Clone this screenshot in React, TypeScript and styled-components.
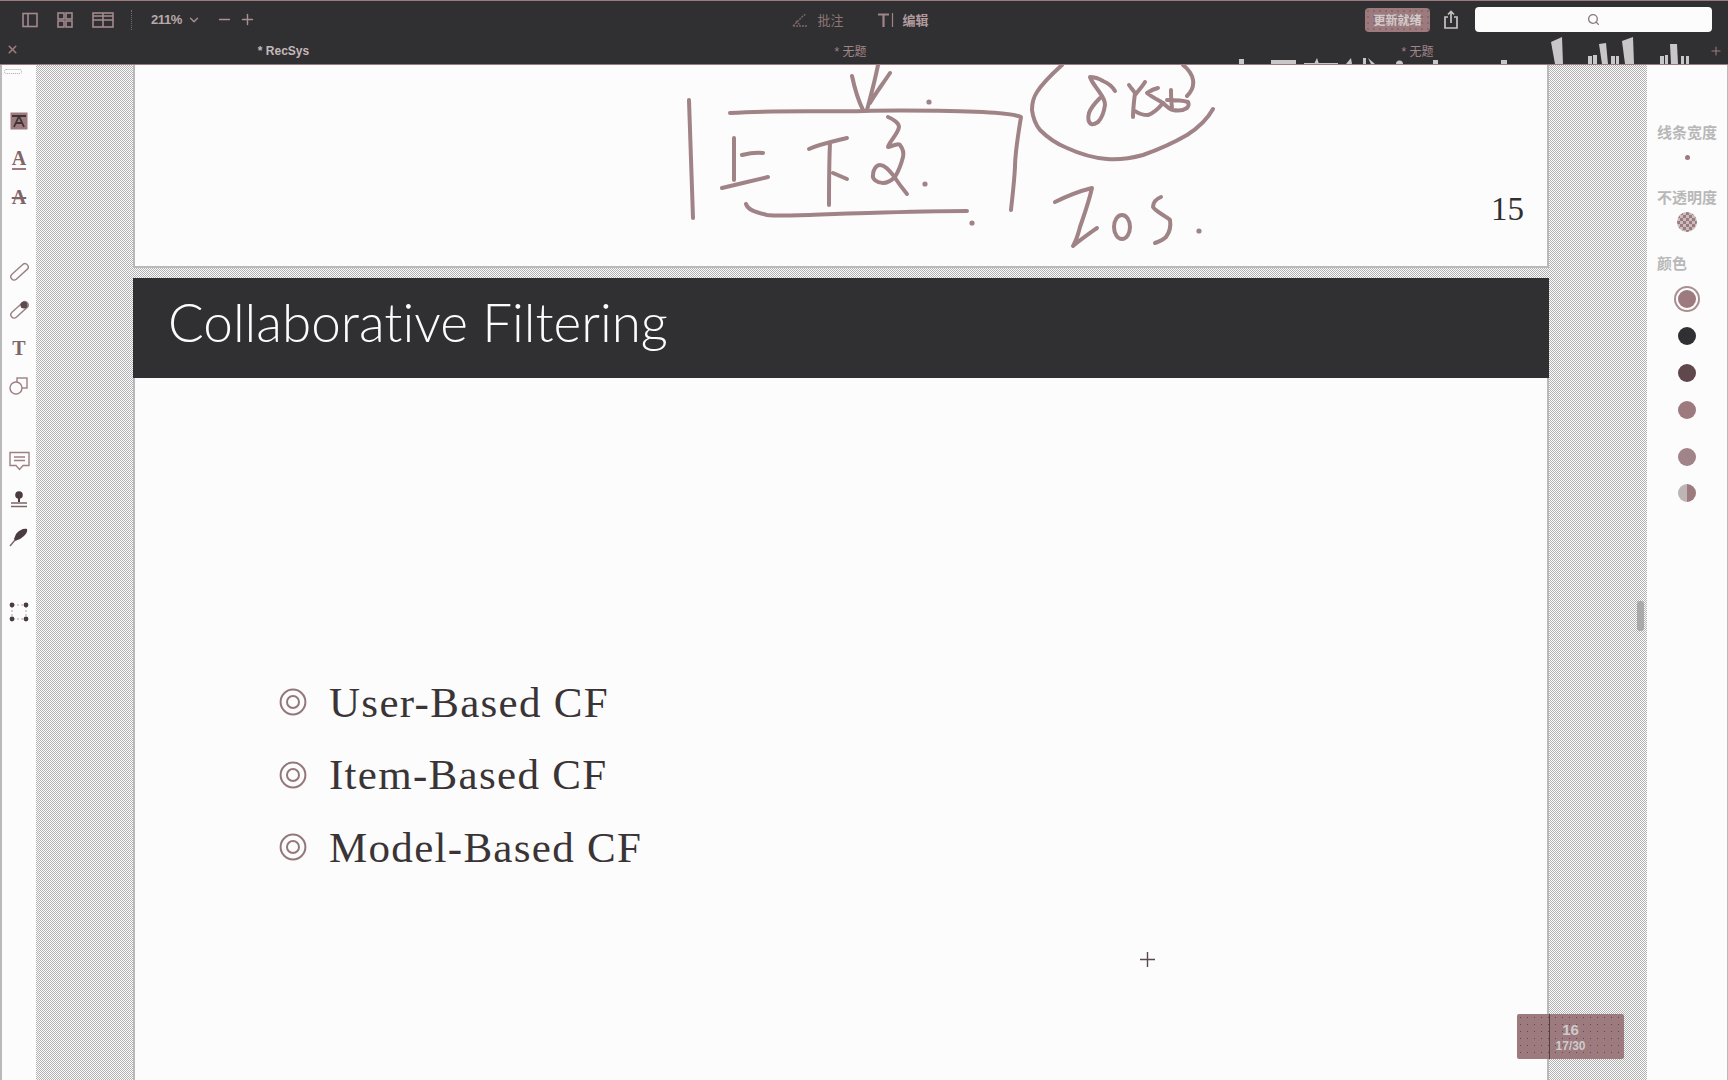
import React from "react";
import styled, { createGlobalStyle } from "styled-components";
import { ChevronDown, Minus, Plus, Search, X } from "lucide-react";

const ROSE = "#9c7a7e";
const INK = "#303032";
const PAPER = "#fcfcfc";
const GREY = "#b9b9b9";
const CJK = `"Liberation Sans", "Noto Sans CJK SC", sans-serif`;

const Global = createGlobalStyle`
  html, body { margin: 0; padding: 0; height: 100%; background: ${PAPER}; overflow: hidden; }
  #root { height: 1080px; }
  * { box-sizing: border-box; }
`;

const Shell = styled.div`
  position: relative;
  width: 1728px;
  height: 1080px;
  display: flex;
  flex-direction: column;
  overflow: hidden;
  font-family: ${CJK};
`;

const TitleBar = styled.header`
  position: relative;
  flex: 0 0 65px;
  display: flex;
  flex-direction: column;
  background: ${INK};
  border-top: 1px solid ${ROSE};
  border-bottom: 1px solid ${ROSE};
`;

const ToolRow = styled.div`
  flex: 0 0 37px;
  display: grid;
  grid-template-columns: 1fr auto 1fr;
  align-items: center;
  padding: 0 16px 0 22px;
`;

const Group = styled.div<{ $end?: boolean }>`
  display: flex;
  align-items: center;
  justify-content: ${(p) => (p.$end ? "flex-end" : "flex-start")};
`;

const ViewButton = styled.span<{ $w?: number }>`
  display: flex;
  width: ${(p) => p.$w ?? 36}px;
  align-items: center;
`;

const Separator = styled.span`
  width: 1px;
  height: 20px;
  margin: 0 19px 0 12px;
  border-left: 1px dotted #7a6a6d;
`;

const Zoom = styled.span`
  font: bold 13px "Liberation Sans", sans-serif;
  letter-spacing: -0.4px;
  color: #b8a8aa;
  margin-right: 5px;
`;

const ZoomBtn = styled.span<{ $first?: boolean }>`
  display: flex;
  margin-left: ${(p) => (p.$first ? 15 : 6)}px;
  color: #a88f92;
`;

const ModeGroup = styled.div`
  display: flex;
  align-items: center;
  gap: 33px;
  margin-right: 14px;
`;

const Mode = styled.span<{ $dim?: boolean }>`
  display: flex;
  align-items: center;
  gap: 8px;
  font-size: 13px;
  color: ${(p) => (p.$dim ? "#8f7478" : "#b09a9d")};
  font-weight: ${(p) => (p.$dim ? 400 : 700)};
`;

const UpdateButton = styled.span`
  width: 65px;
  height: 24px;
  border-radius: 4px;
  background: ${ROSE} radial-gradient(circle, #5a474b 0.5px, transparent 0.8px) 0 0 / 6px 6px;
  color: #d2cbcc;
  font-size: 12px;
  font-weight: 700;
  display: flex;
  align-items: center;
  justify-content: center;
`;

const ShareBtn = styled.span`
  display: flex;
  margin: 0 16px 0 13px;
`;

const SearchBox = styled.div`
  width: 237px;
  height: 25px;
  background: ${PAPER};
  border-radius: 4px;
  display: flex;
  align-items: center;
  justify-content: center;
  color: #8a7478;
`;

const TabRow = styled.div`
  flex: 1;
  display: flex;
  align-items: center;
  position: relative;
  padding-bottom: 1px;
`;

const Tab = styled.div<{ $active?: boolean }>`
  flex: 0 0 567px;
  text-align: center;
  font-size: 12px;
  font-weight: ${(p) => (p.$active ? 700 : 400)};
  color: ${(p) => (p.$active ? "#c4b8ba" : "#a08588")};
`;

const CloseTab = styled.span`
  position: absolute;
  left: 6px;
  top: 5px;
  display: flex;
  color: ${ROSE};
`;

const NewTab = styled.span`
  display: flex;
  margin-left: 8px;
  color: ${ROSE};
`;

const InkOverlay = styled.svg`
  position: absolute;
  left: 0;
  top: -1px;
  width: 1728px;
  height: 65px;
  pointer-events: none;
`;

const Body = styled.main`
  flex: 1;
  display: flex;
  min-height: 0;
`;

const LeftBar = styled.aside`
  flex: 0 0 36px;
  background: ${PAPER};
  border-left: 2px solid ${GREY};
  display: flex;
  flex-direction: column;
  align-items: center;
  gap: 37px;
`;

const ToolGroup = styled.div`
  display: flex;
  flex-direction: column;
`;

const Grip = styled.span`
  width: 18px;
  height: 5px;
  margin: 4px 0 -2px;
  border: 1px dotted #aaa;
  border-radius: 3px;
`;

const TopTools = styled.div`
  margin-top: 30px;
  display: flex;
  flex-direction: column;
`;

const ToolBtn = styled.span`
  width: 30px;
  height: 38px;
  display: flex;
  align-items: center;
  justify-content: center;
`;

const Glyph = styled.span<{ $under?: boolean; $strike?: boolean }>`
  font: bold 20px "Liberation Serif", serif;
  line-height: 1;
  color: #7f6468;
  border-bottom: ${(p) => (p.$under ? `2px solid ${ROSE}` : "0")};
  text-decoration: ${(p) => (p.$strike ? "line-through" : "none")};
`;

const Canvas = styled.section`
  position: relative;
  flex: 1;
  min-width: 0;
  padding: 0 98px 0 97px;
  display: flex;
  flex-direction: column;
  gap: 10px;
  background: repeating-conic-gradient(#b2b2b2 0 25%, #fcfcfc 0 50%) 0 0 / 2px 2px;
`;

const PageTop = styled.article`
  position: relative;
  flex: 0 0 203px;
  background: ${PAPER};
  border: solid ${GREY};
  border-width: 0 2px 2px 2px;
`;

const PageNumber = styled.span`
  position: absolute;
  right: 23px;
  bottom: 40px;
  font: 33px/1 "Liberation Serif", serif;
  color: ${INK};
`;

const Handwriting = styled.svg`
  position: absolute;
  left: -2px;
  top: 0;
  width: 1416px;
  height: 202px;
  overflow: hidden;
`;

const PageMain = styled.article`
  position: relative;
  flex: 1;
  background: ${PAPER};
  border: solid ${GREY};
  border-width: 0 2px;
`;

const SlideHeader = styled.div`
  height: 100px;
  margin: 0 -2px;
  padding: 12px 0 0 35px;
  background: ${INK};
  color: ${PAPER};
  font: 300 53px/1.2 Lato, sans-serif;
  font-variant-ligatures: none;
`;

const Bullets = styled.ul`
  list-style: none;
  margin: 288px 0 0;
  padding: 0 0 0 144px;
`;

const Bullet = styled.li`
  height: 72.5px;
  display: flex;
  align-items: center;
  gap: 22px;
  font: 43px/1 "Liberation Serif", serif;
  letter-spacing: 1.3px;
  color: #3a3436;
`;

const Crosshair = styled.svg`
  position: absolute;
  left: 1005px;
  top: 674px;
`;

const ScrollThumb = styled.span`
  position: absolute;
  right: 3px;
  top: 536px;
  width: 7px;
  height: 30px;
  border-radius: 3px;
  background: #a9a9a9;
`;

const PageBadge = styled.div`
  position: absolute;
  left: 1382px;
  top: 736px;
  width: 107px;
  height: 45px;
  border-radius: 2px;
  background: ${ROSE} radial-gradient(circle, #5a4a4d 0.5px, transparent 0.8px) 0 0 / 7px 7px;
  color: #cfcacb;
  display: flex;
  flex-direction: column;
  align-items: center;
  justify-content: center;
  font-weight: 700;
  &::before {
    content: "";
    position: absolute;
    left: 32px;
    top: 0;
    bottom: 0;
    width: 1px;
    background: #4d3f42;
  }
`;

const BadgeMain = styled.span`
  font-size: 15px;
  line-height: 18px;
`;

const BadgeSub = styled.span`
  font-size: 12px;
  line-height: 14px;
`;

const RightPanel = styled.aside`
  flex: 0 0 81px;
  background: ${PAPER};
  border-right: 1px solid ${GREY};
  display: flex;
  flex-direction: column;
  align-items: center;
  padding-top: 60px;
`;

const PanelLabel = styled.span<{ $left?: boolean }>`
  width: 60px;
  height: 16px;
  font-size: 15px;
  line-height: 16px;
  color: #b8b8b8;
  font-weight: 700;
  text-align: ${(p) => (p.$left ? "left" : "center")};
  white-space: nowrap;
`;

const WidthDot = styled.span`
  width: 5px;
  height: 5px;
  margin: 14px 0 30px;
  border-radius: 50%;
  background: ${ROSE};
`;

const OpacityDot = styled.span`
  width: 20px;
  height: 20px;
  margin: 6px 0 24px;
  border-radius: 50%;
  background: repeating-conic-gradient(#9c7a7e 0 25%, #c9bcbd 0 50%) 0 0 / 6px 6px;
`;

const Swatch = styled.span<{ $color: string; $gap: number; $ring?: boolean }>`
  width: 18px;
  height: 18px;
  margin-top: ${(p) => p.$gap}px;
  border-radius: 50%;
  background: ${(p) => p.$color};
  box-shadow: ${(p) => (p.$ring ? `0 0 0 2px ${PAPER}, 0 0 0 4px #a88f92` : "none")};
`;

const Stroke = ({ d, w = 4 }: { d: string; w?: number }) => (
  <path d={d} fill="none" stroke="#a08387" strokeWidth={w} strokeLinecap="round" strokeLinejoin="round" />
);

const iconStroke = { fill: "none", stroke: "#a38a8d", strokeWidth: 1.6 };
const toolStroke = { fill: "none", stroke: "#9c8083", strokeWidth: 1.4 };

const Target = () => (
  <svg width="28" height="28" viewBox="0 0 28 28">
    <circle cx="14" cy="14" r="12.4" fill="none" stroke="#94777b" strokeWidth="2" />
    <circle cx="14" cy="14" r="6" fill="none" stroke="#94777b" strokeWidth="2" />
  </svg>
);

export default function App() {
  return (
    <Shell>
      <Global />
      <TitleBar>
        <ToolRow>
          <Group>
            <ViewButton $w={35}>
              <svg width="16" height="16" viewBox="0 0 16 16" {...iconStroke}>
                <rect x="1" y="1.5" width="14" height="13" />
                <path d="M6 1.500v13" />
              </svg>
            </ViewButton>
            <ViewButton $w={35}>
              <svg width="16" height="16" viewBox="0 0 16 16" {...iconStroke}>
                <rect x="1" y="1" width="6" height="6" />
                <rect x="9" y="1" width="6" height="6" />
                <rect x="1" y="9" width="6" height="6" />
                <rect x="9" y="9" width="6" height="6" />
              </svg>
            </ViewButton>
            <ViewButton $w={27}>
              <svg width="22" height="16" viewBox="0 0 22 16" {...iconStroke}>
                <rect x="1" y="1" width="20" height="14" />
                <path d="M11 1v14M1 8h20M1 4h20" />
              </svg>
            </ViewButton>
            <Separator />
            <Zoom>211%</Zoom>
            <ChevronDown size={14} color="#a88f92" strokeWidth={2.4} />
            <ZoomBtn $first>
              <Minus size={17} strokeWidth={2} />
            </ZoomBtn>
            <ZoomBtn>
              <Plus size={17} strokeWidth={2} />
            </ZoomBtn>
          </Group>
          <ModeGroup>
            <Mode $dim>
              <svg width="18" height="16" viewBox="0 0 18 16" fill="none" stroke="#7d666a" strokeWidth="1.4" strokeDasharray="2 1">
                <path d="M2 14 12 4l3-2M2 14h14M5 9l4 4" />
              </svg>
              批注
            </Mode>
            <Mode>
              <svg width="18" height="16" viewBox="0 0 18 16" fill="none" stroke="#a08588" strokeWidth="2.2">
                <path d="M1 2.500h11M6.500 2.500V15" />
                <path d="M15.500 1v14" strokeWidth="1.2" />
              </svg>
              编辑
            </Mode>
          </ModeGroup>
          <Group $end>
            <UpdateButton>更新就绪</UpdateButton>
            <ShareBtn>
              <svg width="16" height="20" viewBox="0 0 16 20" fill="none" stroke="#c9c1c2" strokeWidth="1.7">
                <path d="M5 7H2v11h12V7h-3" />
                <path d="M8 13V2M5 4.500 8 1.500l3 3" />
              </svg>
            </ShareBtn>
            <SearchBox>
              <Search size={13} strokeWidth={2.4} />
            </SearchBox>
          </Group>
        </ToolRow>
        <TabRow>
          <CloseTab>
            <X size={13} strokeWidth={3} />
          </CloseTab>
          <Tab $active>* RecSys</Tab>
          <Tab>* 无题</Tab>
          <Tab>* 无题</Tab>
          <NewTab>
            <Plus size={14} strokeWidth={1.8} />
          </NewTab>
        </TabRow>
        <InkOverlay viewBox="0 0 1728 65">
          <g fill="#c9c6c7">
            <path d="M1551 42 1562 37 1563 64H1555Z" />
            <path d="M1599 44 1606 43 1608 64H1602Z" />
            <path d="M1622 41 1633 37 1634 64H1625Z" />
            <path d="M1670 44 1677 44 1678 64H1671Z" />
            <path d="M1588 56h4v8h-4zM1593 55h4v9h-4zM1611 56h4v8h-4zM1616 56h3v8h-3zM1660 56h4v8h-4zM1665 55h3v9h-3zM1681 56h3v8h-3zM1686 56h3v8h-3z" />
            <path d="M1239 59h5v5h-5zM1271 60h25v4h-25zM1304 63h34v1h-34zM1314 64l3-6 2 6zM1346 64l5-6 1 6zM1363 58h3v6h-3zM1368 58l7 6h-4z" />
            <path d="M1396 64a3.500 3.500 0 0 1 7 0zM1433 60h5v4h-5zM1501 60h6v4h-6z" />
          </g>
        </InkOverlay>
      </TitleBar>
      <Body>
        <LeftBar>
          <ToolGroup>
            <Grip />
            <TopTools>
              <ToolBtn>
                <svg width="18" height="18" viewBox="0 0 18 18">
                  <rect x="0.5" y="0.5" width="17" height="17" fill="#9c7a7e" />
                  <path d="M2 4h14M9 4 4 15M9 4l5 11M6 11h6" stroke="#3f3437" strokeWidth="1.8" fill="none" />
                </svg>
              </ToolBtn>
              <ToolBtn>
                <Glyph $under>A</Glyph>
              </ToolBtn>
              <ToolBtn>
                <Glyph $strike>A</Glyph>
              </ToolBtn>
            </TopTools>
          </ToolGroup>
          <ToolGroup>
            <ToolBtn>
              <svg width="20" height="20" viewBox="0 0 20 20" {...toolStroke}>
                <rect x="0" y="7" width="21" height="6.5" rx="3.2" transform="rotate(-42 10 10)" />
              </svg>
            </ToolBtn>
            <ToolBtn>
              <svg width="20" height="20" viewBox="0 0 20 20" {...toolStroke}>
                <rect x="0" y="7" width="21" height="6.5" rx="3.2" transform="rotate(-42 10 10)" />
                <circle cx="15" cy="5" r="3.6" fill="#5c4a4e" stroke="none" />
              </svg>
            </ToolBtn>
            <ToolBtn>
              <Glyph>T</Glyph>
            </ToolBtn>
            <ToolBtn>
              <svg width="20" height="20" viewBox="0 0 20 20" {...toolStroke}>
                <rect x="8" y="2" width="10" height="10" />
                <circle cx="7" cy="12" r="6" fill={PAPER} />
              </svg>
            </ToolBtn>
          </ToolGroup>
          <ToolGroup>
            <ToolBtn>
              <svg width="21" height="20" viewBox="0 0 21 20" {...toolStroke}>
                <path d="M1 1.500h19v13h-6l-3.500 4-3.500-4H1z" />
                <path d="M5 6h11M5 9.500h11" />
              </svg>
            </ToolBtn>
            <ToolBtn>
              <svg width="20" height="20" viewBox="0 0 20 20">
                <circle cx="10" cy="6" r="3.800" fill="#4a3c40" />
                <path d="M9 9h2v4H9z" fill="#4a3c40" />
                <path d="M2 14h16M2 17.500h16" stroke="#7f6468" strokeWidth="1.600" />
              </svg>
            </ToolBtn>
            <ToolBtn>
              <svg width="20" height="20" viewBox="0 0 20 20">
                <path d="M18 2c1 3-2 7-7 10l-5 2-1-2 2-5c3-4 8-6 11-5z" fill="#4a3c40" />
                <path d="M6 13 1 19" stroke="#7f6468" strokeWidth="1.400" />
              </svg>
            </ToolBtn>
          </ToolGroup>
          <ToolGroup>
            <ToolBtn>
              <svg width="20" height="20" viewBox="0 0 20 20">
                <path d="M4 3h12M3 4v12M17 4v12M4 17h12" stroke="#b4a3a5" strokeWidth="1" strokeDasharray="2 2" />
                <g fill="#4a3c40">
                  <circle cx="3" cy="3" r="2.400" />
                  <circle cx="17" cy="3" r="2.400" />
                  <circle cx="3" cy="17" r="2.400" />
                  <circle cx="17" cy="17" r="2.400" />
                </g>
              </svg>
            </ToolBtn>
          </ToolGroup>
        </LeftBar>
        <Canvas>
          <PageTop>
            <Handwriting viewBox="133 65 1416 202">
              <Stroke d="M689 100C690 140 692 180 693 218" />
              <Stroke d="M730 113C780 110 820 112 864 111C900 110 950 111 983 112C1000 113 1015 114 1021 117C1018 135 1015 160 1015 167C1014 185 1012 200 1011 210" />
              <Stroke d="M878 65C874 85 870 98 867 110M852 76C855 90 859 102 863 110M890 73C882 85 875 94 870 103" />
              <Stroke d="M734 138 734 180M742 155C750 153 756 152 763 153M722 188C735 185 755 180 768 177" />
              <Stroke d="M809 149C820 144 835 141 847 138M830 143C829 165 829 185 829 205M833 173 847 179" />
              <Stroke d="M888 117C893 119 899 123 899 127C898 134 889 142 888 147C892 146 899 143 900 145C903 149 904 153 903 157C901 165 898 172 895 177C891 181 887 183 883 183C877 183 872 179 873 175C873 170 876 165 880 165C885 165 889 170 893 175C897 181 902 188 907 194" />
              <Stroke d="M746 204C748 210 755 212 767 215C785 217 820 214 868 213C900 212 940 211 967 211" />
              <Stroke d="M1062 65C1052 74 1042 84 1037 92C1033 98 1032 104 1032 110C1033 118 1036 125 1040 130C1048 138 1057 144 1067 148C1080 154 1094 158 1107 159C1120 160 1132 158 1143 155C1160 149 1175 142 1187 135C1198 128 1208 118 1213 109" />
              <Stroke d="M1183 65C1188 69 1192 74 1193 80C1194 86 1191 92 1187 96" />
              <Stroke d="M1115 91C1112 86 1108 83 1103 81C1098 78 1094 77 1090 77C1092 83 1097 88 1100 93C1103 97 1105 101 1105 105C1104 112 1102 118 1098 122C1095 124 1093 125 1091 124C1088 122 1088 117 1089 113C1091 107 1096 102 1100 98" />
              <Stroke d="M1129 85C1131 88 1133 90 1135 93C1134 101 1133 110 1133 117M1145 82C1142 87 1138 91 1135 95M1135 111C1139 114 1144 115 1148 115C1154 113 1159 108 1163 103" />
              <Stroke d="M1158 88C1153 89 1150 91 1147 93C1152 97 1158 100 1163 103C1166 106 1169 109 1173 110C1178 111 1184 110 1187 108C1189 106 1189 104 1188 102C1182 100 1174 100 1167 100M1171 90C1171 96 1171 102 1172 107" />
              <Stroke d="M1055 202C1067 196 1080 191 1092 188C1088 205 1083 218 1080 227C1078 235 1076 241 1073 246C1080 240 1090 233 1097 228" />
              <ellipse cx="1122" cy="227" rx="8" ry="12" fill="none" stroke="#a08387" strokeWidth="4" />
              <Stroke d="M1161 197C1156 199 1153 203 1153 207C1156 212 1166 216 1170 220C1171 226 1169 233 1166 237C1163 240 1158 242 1155 243" />
              <g fill="#a08387">
                <circle cx="929" cy="102" r="2.600" />
                <circle cx="925" cy="184" r="2.600" />
                <circle cx="972" cy="223" r="2.600" />
                <circle cx="1199" cy="231" r="2.600" />
              </g>
            </Handwriting>
            <PageNumber>15</PageNumber>
          </PageTop>
          <PageMain>
            <SlideHeader>Collaborative Filtering</SlideHeader>
            <Bullets>
              <Bullet>
                <Target />
                User-Based CF
              </Bullet>
              <Bullet>
                <Target />
                Item-Based CF
              </Bullet>
              <Bullet>
                <Target />
                Model-Based CF
              </Bullet>
            </Bullets>
            <Crosshair width="15" height="15" viewBox="0 0 15 15">
              <path d="M7.500 0v15M0 7.500h15" stroke="#5a4a4d" strokeWidth="1.400" />
            </Crosshair>
            <PageBadge>
              <BadgeMain>16</BadgeMain>
              <BadgeSub>17/30</BadgeSub>
            </PageBadge>
          </PageMain>
          <ScrollThumb />
        </Canvas>
        <RightPanel>
          <PanelLabel>线条宽度</PanelLabel>
          <WidthDot />
          <PanelLabel>不透明度</PanelLabel>
          <OpacityDot />
          <PanelLabel $left>颜色</PanelLabel>
          <Swatch $color="#9c7a7e" $ring $gap={18} />
          <Swatch $color={INK} $gap={19} />
          <Swatch $color="#5f474c" $gap={19} />
          <Swatch $color="#9c7a7e" $gap={19} />
          <Swatch $color="#a08488" $gap={29} />
          <Swatch $color="linear-gradient(90deg,#bdb4b5 50%,#9c7a7e 50%)" $gap={18} />
        </RightPanel>
      </Body>
    </Shell>
  );
}
